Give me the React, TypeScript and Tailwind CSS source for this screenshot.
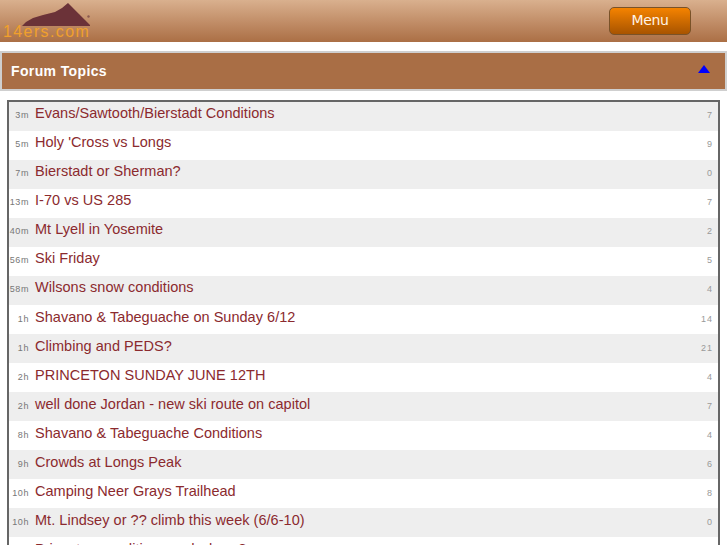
const topics = [
  ["3m", "Evans/Sawtooth/Bierstadt Conditions", "7"],
  ["5m", "Holy 'Cross vs Longs", "9"],
  ["7m", "Bierstadt or Sherman?", "0"],
  ["13m", "I-70 vs US 285", "7"],
  ["40m", "Mt Lyell in Yosemite", "2"],
  ["56m", "Ski Friday", "5"],
  ["58m", "Wilsons snow conditions", "4"],
  ["1h", "Shavano & Tabeguache on Sunday 6/12", "14"],
  ["1h", "Climbing and PEDS?", "21"],
  ["2h", "PRINCETON SUNDAY JUNE 12TH", "4"],
  ["2h", "well done Jordan - new ski route on capitol", "7"],
  ["8h", "Shavano & Tabeguache Conditions", "4"],
  ["9h", "Crowds at Longs Peak", "6"],
  ["10h", "Camping Neer Grays Trailhead", "8"],
  ["10h", "Mt. Lindsey or ?? climb this week (6/6-10)", "0"],
  ["11h", "Princeton conditions and where?", "3"],
];

function Logo() {
  return (
    <div className="relative h-[41px] w-[92px]">
      <svg width="92" height="41" viewBox="0 0 92 41" className="absolute left-0 top-0">
        <path d="M22 25 L26 21 L33 17 L43 14 L55 11 L62 7 L68 2 L72 6 L79 13 L85 19 L90 24 L90 25 Z" fill="#6b3238" />
        <circle cx="88.5" cy="15.5" r="1.2" fill="#8a5a50" />
      </svg>
      <span className="absolute left-[3px] top-[22px] whitespace-nowrap text-[16px] leading-[18px] tracking-[1.4px] text-[#f0a02c] font-['Liberation_Sans',sans-serif]">14ers.com</span>
    </div>
  );
}

export default function App() {
  return (
    <div className="h-[545px] w-[727px] overflow-hidden bg-white font-['Liberation_Sans',sans-serif]">
      <header className="flex h-[42px] items-center justify-between bg-gradient-to-b from-[#d9b08e] to-[#ab6f45] pr-[36px]">
        <Logo />
        <button className="mb-[1px] flex h-[28px] w-[82px] items-center justify-center rounded-[5px] border border-[#7a5228] bg-gradient-to-b from-[#f58300] to-[#a85400] text-[14px] tracking-[-0.4px] text-[#fff3e6] font-['DejaVu_Sans',sans-serif]">
          Menu
        </button>
      </header>

      <div className="mt-[9px] flex h-[40px] items-center justify-between border-2 border-[#cfcfcf] bg-[#a96e45] pl-[9px] pr-[15px]">
        <h2 className="text-[14px] font-bold tracking-[0.37px] text-white">Forum Topics</h2>
        <span className="-translate-y-[2px] h-0 w-0 border-x-[6px] border-b-[8px] border-x-transparent border-b-[#0000ff]" />
      </div>

      <div className="mx-[7px] mt-[9px] border-2 border-b-0 border-[#666666]">
        {topics.map(([age, title, count], i) => (
          <div key={i} className={`flex h-[29px] items-center ${i % 2 === 0 ? "bg-[#eeeeee]" : "bg-white"}`}>
            <span className={`w-[20px] shrink-0 whitespace-nowrap text-right text-[9px] tracking-[0.6px] text-[#777777] ${i < 7 ? "-translate-y-[1px]" : ""}`}>{age}</span>
            <span className={`ml-[6px] flex-1 text-[14.5px] tracking-[0.03px] text-[#8b2a2e] ${i < 7 ? "-translate-y-[3px]" : "-translate-y-[2px]"}`}>{title}</span>
            <span className={`pr-[5px] text-[9px] tracking-[1px] text-[#999999] ${i < 7 ? "-translate-y-[1px]" : ""}`}>{count}</span>
          </div>
        ))}
      </div>
    </div>
  );
}
